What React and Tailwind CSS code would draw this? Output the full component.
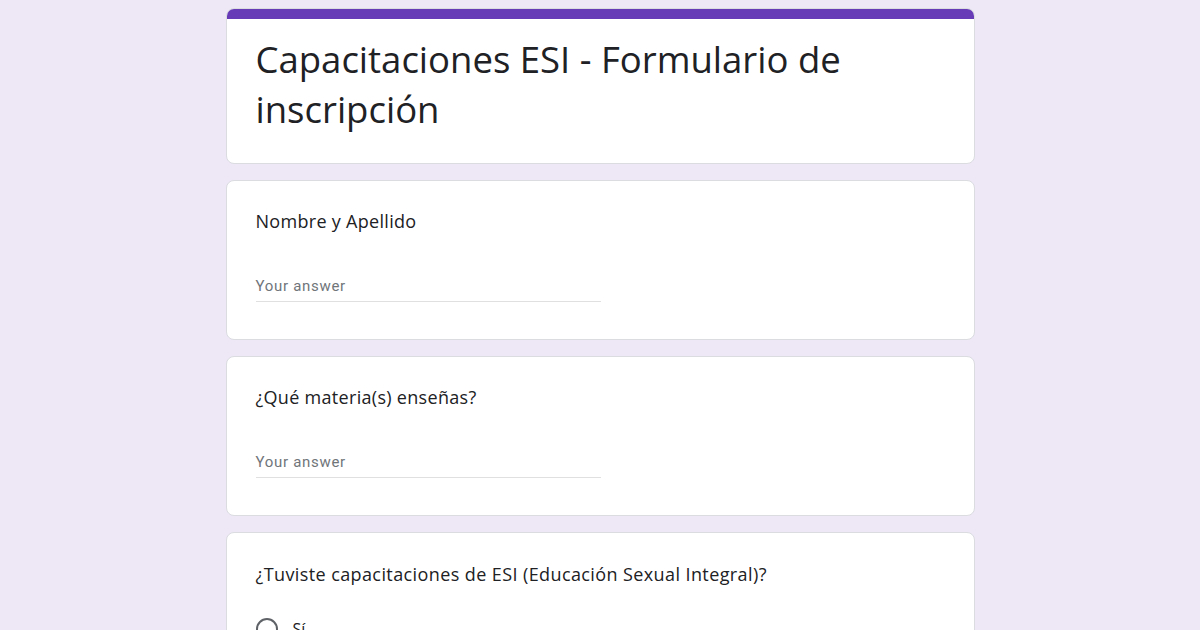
export default function App() {
  const font = { fontFamily: '"Open Sans", Roboto, sans-serif' };
  return (
    <div className="h-[630px] overflow-hidden bg-[#ede7f6] flex justify-center">
      <div className="w-[749px] pt-[8px] flex flex-col gap-[16px]">
        <div className="shrink-0 bg-white rounded-[8px] border border-[#dadce0] overflow-hidden h-[156px]">
          <div className="h-[11px] bg-[#673ab7] -mx-px -mt-px"></div>
          <div className="px-[29px] pt-[15px]">
            <h1 className="text-[36.5px] leading-[50px] text-[#202124]" style={font}>
              Capacitaciones ESI - Formulario de inscripción
            </h1>
          </div>
        </div>
        {["Nombre y Apellido", "¿Qué materia(s) enseñas?"].map((q) => (
          <div key={q} className="shrink-0 bg-white rounded-[8px] border border-[#dadce0] h-[160px] px-[29px] pt-[28px]">
            <div className="text-[18px] leading-[24px] tracking-[0.3px] text-[#202124]" style={font}>{q}</div>
            <div className="mt-[40px] w-[345px] border-b border-[#e0e0e0] h-[29px] leading-[24px]">
              <span className="text-[15px] text-[#70757a] tracking-[0.7px]" style={{ fontFamily: 'Roboto, sans-serif' }}>Your answer</span>
            </div>
          </div>
        ))}
        <div className="shrink-0 bg-white rounded-[8px] border border-[#dadce0] h-[160px] px-[29px] pt-[29px]">
          <div className="text-[18px] leading-[24px] tracking-[0.4px] text-[#202124]" style={font}>¿Tuviste capacitaciones de ESI (Educación Sexual Integral)?</div>
          <div className="mt-[31px] flex items-center gap-[15px]">
            <div className="w-[22px] h-[22px] rounded-full border-2 border-[#5f6368]"></div>
            <span className="text-[16px] text-[#202124]" style={font}>Sí</span>
          </div>
        </div>
      </div>
    </div>
  );
}
